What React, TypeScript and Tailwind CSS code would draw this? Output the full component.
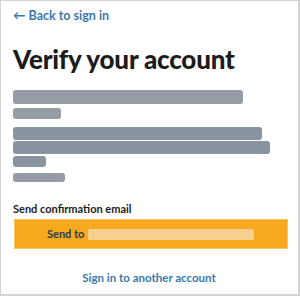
export default function App() {
  return (
    <div className="w-[300px] h-[296px] bg-white border-t border-l border-r-2 border-b-2 border-[#d4d4d4] font-['Lato',sans-serif]">
      <div className="pl-[12px] pr-[11px] pt-[7px]">
        {/* Back link */}
        <a href="#" className="block text-[12.5px] leading-[16px] font-bold text-[#3b78ad]">
          ← Back to sign in
        </a>

        {/* Heading */}
        <h1 className="mt-[19px] text-[26px] leading-[32px] font-black text-[#1b1b1b] tracking-[-0.2px]">
          Verify your account
        </h1>

        {/* Redacted text */}
        <div className="mt-[15px] flex flex-col">
          <div className="h-[14px] w-[230px] rounded-[3px] bg-[#969ca3]" />
          <div className="mt-[4px] h-[11px] w-[48px] rounded-[3px] bg-[#969ca3]" />
          <div className="mt-[8px] h-[13px] w-[249px] rounded-[3px] bg-[#8994a0]" />
          <div className="mt-[1px] h-[13px] w-[257px] rounded-[3px] bg-[#8994a0]" />
          <div className="mt-[2px] h-[11px] w-[33px] rounded-[3px] bg-[#8994a0]" />
          <div className="mt-[6px] h-[9px] w-[52px] rounded-[3px] bg-[#969ca3]" />
        </div>

        {/* Confirmation */}
        <p className="mt-[20px] text-[11px] leading-[14px] font-bold text-[#222]">
          Send confirmation email
        </p>
        <button className="mt-[3px] ml-[1px] w-[274px] h-[30px] flex items-center pl-[32px] bg-[#f6a81f] border border-[#fbc462] text-[11px] font-bold text-[#2b3b4e]">
          Send to
          <span className="ml-[4px] h-[11px] w-[166px] rounded-[2px] bg-[#f6d08e]" />
        </button>

        <div className="mt-[21px] flex justify-center pr-[2px]">
          <a href="#" className="text-[11.5px] leading-[16px] font-bold text-[#3b78ad]">
            Sign in to another account
          </a>
        </div>
      </div>
    </div>
  )
}
